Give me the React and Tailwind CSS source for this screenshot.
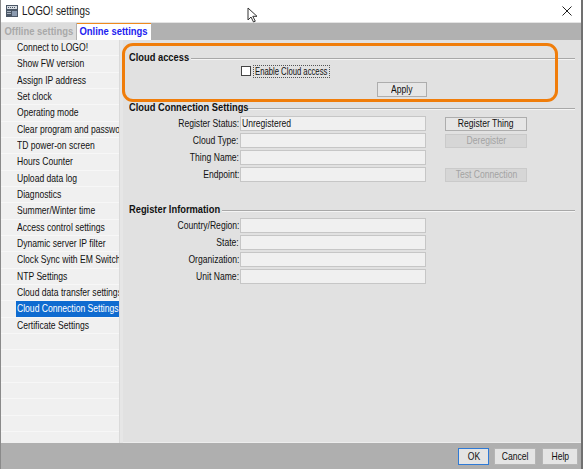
import { useState } from 'react';

const menuItems = [
  'Connect to LOGO!',
  'Show FW version',
  'Assign IP address',
  'Set clock',
  'Operating mode',
  'Clear program and password',
  'TD power-on screen',
  'Hours Counter',
  'Upload data log',
  'Diagnostics',
  'Summer/Winter time',
  'Access control settings',
  'Dynamic server IP filter',
  'Clock Sync with EM Switch',
  'NTP Settings',
  'Cloud data transfer settings',
  'Cloud Connection Settings',
  'Certificate Settings',
];

// the dialog font is a narrow one, so squeeze Liberation Sans a bit
const T = ({ children, origin = 'origin-left', className = '' }) => (
  <span className={`inline-block whitespace-nowrap scale-x-[0.78] ${origin} ${className}`}>{children}</span>
);

const LogoIcon = () => (
  <svg width="12" height="12" viewBox="0 0 12 12">
    <rect x="0" y="0" width="12" height="12" fill="#4b5766" />
    <rect x="1" y="1" width="10" height="3" fill="#d8dde3" />
    <rect x="2" y="2" width="1" height="1" fill="#4b5766" />
    <rect x="4" y="2" width="1" height="1" fill="#4b5766" />
    <rect x="6" y="2" width="1" height="1" fill="#4b5766" />
    <rect x="8" y="2" width="1" height="1" fill="#4b5766" />
    <rect x="6" y="6" width="5" height="5" fill="#8c9bb0" />
    <rect x="1" y="6" width="4" height="1" fill="#aab4c0" />
    <rect x="1" y="8" width="4" height="1" fill="#aab4c0" />
  </svg>
);

const Cursor = () => (
  <svg width="12" height="16" viewBox="0 0 12 16">
    <path d="M1 1 L1 13 L4 10 L6.5 15 L8.3 14.2 L5.8 9.3 L10 9.3 Z" fill="#fff" stroke="#333" strokeWidth="1" strokeLinejoin="round" />
  </svg>
);

const SectionHeader = ({ title, width, className = '' }) => (
  <div className={`flex items-center h-[14px] ${className}`}>
    <div className={`${width} overflow-visible`}>
      <span className="inline-block whitespace-nowrap scale-x-[0.81] origin-left font-bold text-[11.5px] text-[#111] leading-none">{title}</span>
    </div>
    <div className="flex-1 mt-[5px] border-t border-[#a8a8a8] border-b-[#f4f4f4] border-b h-[2px]" />
  </div>
);

const Field = ({ label, value = '', children }) => (
  <div className="flex items-center h-[15px]">
    <div className="w-[117px] text-right text-[11px] text-[#111] leading-none pr-[1px]">
      <T origin="origin-right">{label}</T>
    </div>
    <div className="w-[186px] h-[15px] bg-[#f0f0f0] border border-[#c6c6c6] text-[11px] leading-[13px] px-[1px] text-[#111]">
      {value && <T>{value}</T>}
    </div>
    {children}
  </div>
);

const SideButton = ({ label, disabled }) => (
  <button
    className={`ml-[19px] w-[82px] h-[14px] border text-[11px] leading-none ${
      disabled ? 'bg-[#d6d6d6] border-[#cacaca] text-[#a3a3a3]' : 'bg-[#e6e6e6] border-[#adadad] text-[#111]'
    }`}
  >
    <T origin="origin-center">{label}</T>
  </button>
);

const FooterButton = ({ label, width, primary }) => (
  <button
    className={`${width} h-[17px] bg-[#e4e4e4] border text-[11px] leading-none text-[#111] ${
      primary ? 'border-[#2f7ad6]' : 'border-[#b5b5b5]'
    }`}
  >
    <T origin="origin-center">{label}</T>
  </button>
);

export default function App() {
  const [enabled, setEnabled] = useState(false);
  const [selected, setSelected] = useState('Cloud Connection Settings');

  return (
    <div className="relative w-[583px] h-[469px] flex flex-col overflow-hidden bg-white border-l border-l-[#8a8a8a] border-r-2 border-r-[#707070] font-['Liberation_Sans',Arial,sans-serif]">
      {/* title bar */}
      <div className="flex items-center h-[23px] bg-white pl-[5px] border-b border-[#e4e4e4]">
        <LogoIcon />
        <span className="ml-[4px] inline-block scale-x-[0.82] origin-left text-[12px] text-[#1a1a1a]">LOGO! settings</span>
        <div className="flex-1" />
        <svg width="10" height="10" viewBox="0 0 10 10" className="mr-[9px]">
          <path d="M0.5 0.5 L9.5 9.5 M9.5 0.5 L0.5 9.5" stroke="#222" strokeWidth="1" />
        </svg>
      </div>

      {/* tabs */}
      <div className="flex h-[17px] bg-[#b1b1b1]">
        <div className="w-[75px] flex items-center justify-center bg-[#dcdcdc] text-[11.5px] font-bold text-[#a9a9a9]">
          <span className="inline-block whitespace-nowrap scale-x-[0.82] origin-center">Offline settings</span>
        </div>
        <div className="w-[74px] ml-[1px] flex items-center justify-center bg-white border-t border-t-[#f08a1c] text-[11.5px] font-bold text-[#1d1df0]">
          <span className="inline-block whitespace-nowrap scale-x-[0.82] origin-center">Online settings</span>
        </div>
      </div>

      {/* body */}
      <div className="flex flex-1 min-h-0">
        <div className="w-[118px] bg-[#f0f0f0] overflow-hidden flex flex-col">
          {menuItems.map((item) => (
            <div
              key={item}
              onClick={() => setSelected(item)}
              className="h-[16.33px] shrink-0 border-b border-[#f7f7f7] pl-[15px]"
            >
              <div
                className={`h-full flex items-center pl-[1px] overflow-hidden text-[11px] leading-none ${
                  selected === item ? 'bg-[#0f6bd0] text-white' : 'text-[#111]'
                }`}
              >
                <T>{item}</T>
              </div>
            </div>
          ))}
          {Array.from({ length: 7 }).map((_, i) => (
            <div key={i} className="h-[16.33px] shrink-0 border-b border-[#f7f7f7]" />
          ))}
        </div>
        <div className="w-[4px] bg-[#e6e6e6] border-l border-[#dadada]" />

        <div className="flex-1 bg-[#e1e1e1] pt-[9px] pl-[6px] pr-[6px] flex flex-col border-b border-[#ececec]">
          <SectionHeader title="Cloud access" width="w-[62px]" />
          <div className="flex items-center h-[14px] mt-[1px] pl-[112px]">
            <button
              onClick={() => setEnabled(!enabled)}
              className="w-[10px] h-[10px] bg-white border border-[#444] flex items-center justify-center"
            >
              {enabled && (
                <svg width="8" height="8" viewBox="0 0 8 8">
                  <path d="M1 4 L3 6 L7 1.5" stroke="#222" strokeWidth="1.2" fill="none" />
                </svg>
              )}
            </button>
            <span className="ml-[2px] w-[77px] h-[13px] px-[1px] border border-dotted border-[#555] text-[11px] leading-[11px] text-[#111] overflow-hidden">
              <span className="inline-block whitespace-nowrap scale-x-[0.7] origin-left">Enable Cloud access</span>
            </span>
          </div>
          <div className="flex mt-[4px] pl-[248px]">
            <button className="w-[50px] h-[15px] bg-[#e6e6e6] border border-[#adadad] text-[11px] leading-none text-[#111]">
              <T origin="origin-center">Apply</T>
            </button>
          </div>

          <SectionHeader title="Cloud Connection Settings" width="w-[118px]" className="mt-[2px]" />
          <div className="flex flex-col gap-[2px] mt-[3px] -ml-[6px]">
            <Field label="Register Status:" value="Unregistered">
              <SideButton label="Register Thing" />
            </Field>
            <Field label="Cloud Type:">
              <SideButton label="Deregister" disabled />
            </Field>
            <Field label="Thing Name:" />
            <Field label="Endpoint:">
              <SideButton label="Test Connection" disabled />
            </Field>
          </div>

          <SectionHeader title="Register Information" width="w-[93px]" className="mt-[19px]" />
          <div className="flex flex-col gap-[2px] mt-[3px] -ml-[6px]">
            <Field label="Country/Region:" />
            <Field label="State:" />
            <Field label="Organization:" />
            <Field label="Unit Name:" />
          </div>
        </div>
      </div>

      {/* footer */}
      <div className="h-[26px] bg-[#afafaf] flex items-center justify-end gap-[5px] pr-[3px]">
        <FooterButton label="OK" width="w-[31px]" primary />
        <FooterButton label="Cancel" width="w-[42px]" />
        <FooterButton label="Help" width="w-[36px] ml-[1px]" />
      </div>

      {/* annotation highlight */}
      <div className="absolute left-[121px] top-[43px] w-[436px] h-[59px] rounded-[11px] border-[3px] border-[#f07d0a] pointer-events-none" />
      <div className="absolute left-[246px] top-[7px] pointer-events-none">
        <Cursor />
      </div>
    </div>
  );
}
